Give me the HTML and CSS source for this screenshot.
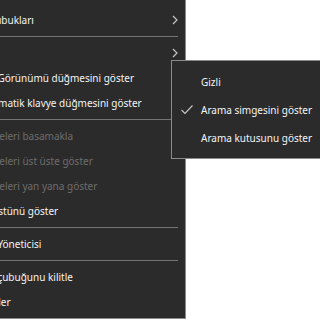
FILE: index.html
```html
<!DOCTYPE html>
<html lang="tr">
<head>
  <meta charset="UTF-8">
  <title>Görev çubuğu menüsü</title>
  <link rel="stylesheet" href="styles.css">
</head>
<body>

  <ul class="menu">
    <li class="item">
      <span class="label">Araç çubukları</span>
      <svg class="chevron" width="6" height="10" viewBox="0 0 6 10"><path d="M1 1 L5 5 L1 9" /></svg>
    </li>
    <li class="sep"></li>
    <li class="item">
      <span class="label">Ara</span>
      <svg class="chevron" width="6" height="10" viewBox="0 0 6 10"><path d="M1 1 L5 5 L1 9" /></svg>
    </li>
    <li class="item"><span class="label">Görev Görünümü düğmesini göster</span></li>
    <li class="item"><span class="label">Dokunmatik klavye düğmesini göster</span></li>
    <li class="sep"></li>
    <li class="item disabled"><span class="label">Pencereleri basamakla</span></li>
    <li class="item disabled"><span class="label">Pencereleri üst üste göster</span></li>
    <li class="item disabled"><span class="label">Pencereleri yan yana göster</span></li>
    <li class="item"><span class="label">Masaüstünü göster</span></li>
    <li class="sep"></li>
    <li class="item"><span class="label">Görev Yöneticisi</span></li>
    <li class="sep"></li>
    <li class="item"><span class="label">Görev çubuğunu kilitle</span></li>
    <li class="item"><span class="label">Özellikler</span></li>
  </ul>

  <ul class="submenu">
    <li class="sub-item">
      <span class="check"></span>
      <span>Gizli</span>
    </li>
    <li class="sub-item">
      <span class="check">
        <svg width="12" height="10" viewBox="0 0 12 10"><path d="M0.5 5 L4 8.5 L11.5 0.5" /></svg>
      </span>
      <span>Arama simgesini göster</span>
    </li>
    <li class="sub-item">
      <span class="check"></span>
      <span>Arama kutusunu göster</span>
    </li>
  </ul>

</body>
</html>
```

FILE: styles.css
```css
body {
  margin: 0;
  background: #ffffff;
  font-family: "Noto Sans", "Open Sans", sans-serif;
  font-size: 10px;
  color: #f4f4f4;
  overflow: hidden;
}

.menu {
  list-style: none;
  margin: 0 0 0 -68px;
  padding: 7px 0 4px;
  width: 253px;
  background: #2b2b2b;
  border-right: 1px solid #8a8a8a;
  border-bottom: 1px solid #8a8a8a;
}

.item {
  display: flex;
  align-items: center;
  height: 25px;
  padding: 0 7px 0 35px;
}

.label {
  flex: 1;
  white-space: nowrap;
}

.disabled {
  color: #6d6d6d;
}

.chevron path {
  fill: none;
  stroke: #c4c4c4;
  stroke-width: 1.2;
}

.sep {
  height: 1px;
  margin: 4px 7px 3px 0;
  background: #747474;
}

.submenu {
  list-style: none;
  position: absolute;
  top: 60px;
  left: 171px;
  right: -20px;
  margin: 0;
  padding: 7px 0 6px;
  background: #2b2b2b;
  border: 1px solid #8a8a8a;
}

.sub-item {
  display: flex;
  align-items: center;
  height: 28px;
}

.check {
  display: flex;
  align-items: center;
  width: 29px;
  padding-left: 9px;
  box-sizing: border-box;
}

.check path {
  fill: none;
  stroke: #c8c8c8;
  stroke-width: 1.1;
}
```
